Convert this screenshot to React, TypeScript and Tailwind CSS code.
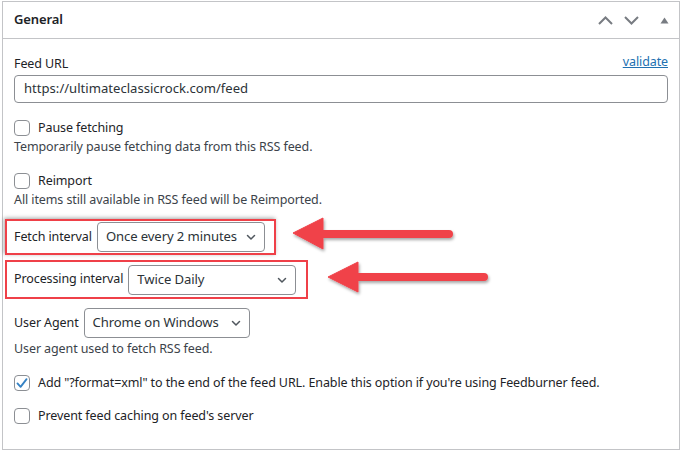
import React from "react";

const font = { fontFamily: '"Noto Sans", "Open Sans", sans-serif' };

function Checkbox({ checked = false }: { checked?: boolean }) {
  return (
    <span className="w-4 h-4 shrink-0 rounded-[4px] border border-[#8c8f94] bg-white flex items-center justify-center">
      {checked && (
        <svg width="14" height="14" viewBox="0 0 20 20">
          <path d="M3.5 10.5l4.5 5 8.5-11" fill="none" stroke="#3582c4" strokeWidth="2.6" strokeLinecap="round" strokeLinejoin="round" />
        </svg>
      )}
    </span>
  );
}

function Chevron() {
  return (
    <svg width="12" height="12" viewBox="0 0 12 12" className="shrink-0">
      <path d="M2.5 4.5L6 8l3.5-3.5" fill="none" stroke="#50575e" strokeWidth="1.5" strokeLinecap="round" strokeLinejoin="round" />
    </svg>
  );
}

function Select({ value, width }: { value: string; width: string }) {
  return (
    <div className={`flex items-center justify-between rounded-[4px] border border-[#8c8f94] bg-white pl-[8px] pr-[7px] h-[30px] text-[#2c3338] ${width}`}>
      <span className="text-[13.1px] leading-none whitespace-nowrap">{value}</span>
      <Chevron />
    </div>
  );
}

export default function App() {
  return (
    <div className="relative w-[682px] h-[453px] bg-white text-[12.5px] tracking-[-0.1px] text-[#3c434a]" style={font}>
      <div className="absolute left-[2px] top-[1px] w-[678px] h-[449px] border border-[#c3c4c7] bg-white flex flex-col">
        <div className="h-[37px] shrink-0 border-b border-[#c3c4c7] flex items-center justify-between pl-[11px] pr-[10px]">
          <span className="text-[13px] font-semibold text-[#1d2327] tracking-[-0.1px]">General</span>
          <div className="flex items-center text-[#787c82]">
            <svg width="15" height="9" viewBox="0 0 15 9"><path d="M1 8l6.5-6.5L14 8" fill="none" stroke="#787c82" strokeWidth="2" /></svg>
            <svg width="15" height="9" viewBox="0 0 15 9" className="ml-[11px]"><path d="M1 1l6.5 6.5L14 1" fill="none" stroke="#787c82" strokeWidth="2" /></svg>
            <svg width="9" height="7" viewBox="0 0 9 7" className="ml-[21px]"><path d="M0.5 6.5h8L4.5 0.5z" fill="#787c82" /></svg>
          </div>
        </div>
        <div className="px-[11px] flex flex-col">
          <div className="mt-[16px] flex items-center justify-between h-[18px]">
            <span className="text-[#1d2327]">Feed URL</span>
            <span className="text-[#2271b1] underline -mt-[4px]">validate</span>
          </div>
          <div className="mt-[2px] h-[28px] rounded-[4px] border border-[#8c8f94] flex items-center pl-[9px] text-[13.1px] tracking-normal text-[#2c3338]">
            https://ultimateclassicrock.com/feed
          </div>
          <div className="mt-[16px] flex items-center gap-[8px] h-[18px]">
            <Checkbox />
            <span className="text-[#1d2327]">Pause fetching</span>
          </div>
          <div className="mt-[1px] h-[18px] leading-[18px]">Temporarily pause fetching data from this RSS feed.</div>
          <div className="mt-[16px] flex items-center gap-[8px] h-[18px]">
            <Checkbox />
            <span className="text-[#1d2327]">Reimport</span>
          </div>
          <div className="mt-[1px] h-[18px] leading-[18px]">All items still available in RSS feed will be Reimported.</div>

          <div className="mt-[10px] -ml-[9px] w-fit h-[36px] border-2 border-[#ef4048] shadow-[-1px_-1px_4px_rgba(0,0,0,0.35)] flex items-center pl-[7px] pr-[9px] gap-[5px]">
            <span className="text-[#1d2327]">Fetch interval</span>
            <Select value="Once every 2 minutes" width="w-[168px]" />
          </div>
          <div className="mt-[5px] -ml-[9px] w-fit h-[39px] border-2 border-[#ef4048] flex items-center pl-[7px] pr-[10px] gap-[5px]">
            <span className="text-[#1d2327]">Processing interval</span>
            <Select value="Twice Daily" width="w-[168px]" />
          </div>
          <div className="mt-[9px] flex items-center gap-[5px] h-[30px]">
            <span className="text-[#1d2327]">User Agent</span>
            <Select value="Chrome on Windows" width="w-[166px]" />
          </div>
          <div className="mt-[2px] h-[18px] leading-[18px]">User agent used to fetch RSS feed.</div>
          <div className="mt-[16px] flex items-center gap-[8px] h-[18px]">
            <Checkbox checked />
            <span className="text-[#1d2327]">Add "?format=xml" to the end of the feed URL. Enable this option if you're using Feedburner feed.</span>
          </div>
          <div className="mt-[15px] flex items-center gap-[8px] h-[18px]">
            <Checkbox />
            <span className="text-[#1d2327]">Prevent feed caching on feed's server</span>
          </div>
        </div>
      </div>
      <svg className="absolute left-0 top-0 pointer-events-none" width="682" height="453" viewBox="0 0 682 453">
        <defs>
          <filter id="sh" x="-20%" y="-50%" width="140%" height="200%">
            <feDropShadow dx="1" dy="2" stdDeviation="1.5" floodColor="#000" floodOpacity="0.35" />
          </filter>
        </defs>
        <g filter="url(#sh)" fill="#f0424a" stroke="#f0424a">
          <line x1="320" y1="234" x2="449" y2="234" strokeWidth="8" strokeLinecap="round" />
          <path d="M293 233L323 218L323 249Z" strokeWidth="1" strokeLinejoin="round" />
          <line x1="355" y1="277" x2="484" y2="277" strokeWidth="8" strokeLinecap="round" />
          <path d="M328 277L358 262L358 292Z" strokeWidth="1" strokeLinejoin="round" />
        </g>
      </svg>
    </div>
  );
}
